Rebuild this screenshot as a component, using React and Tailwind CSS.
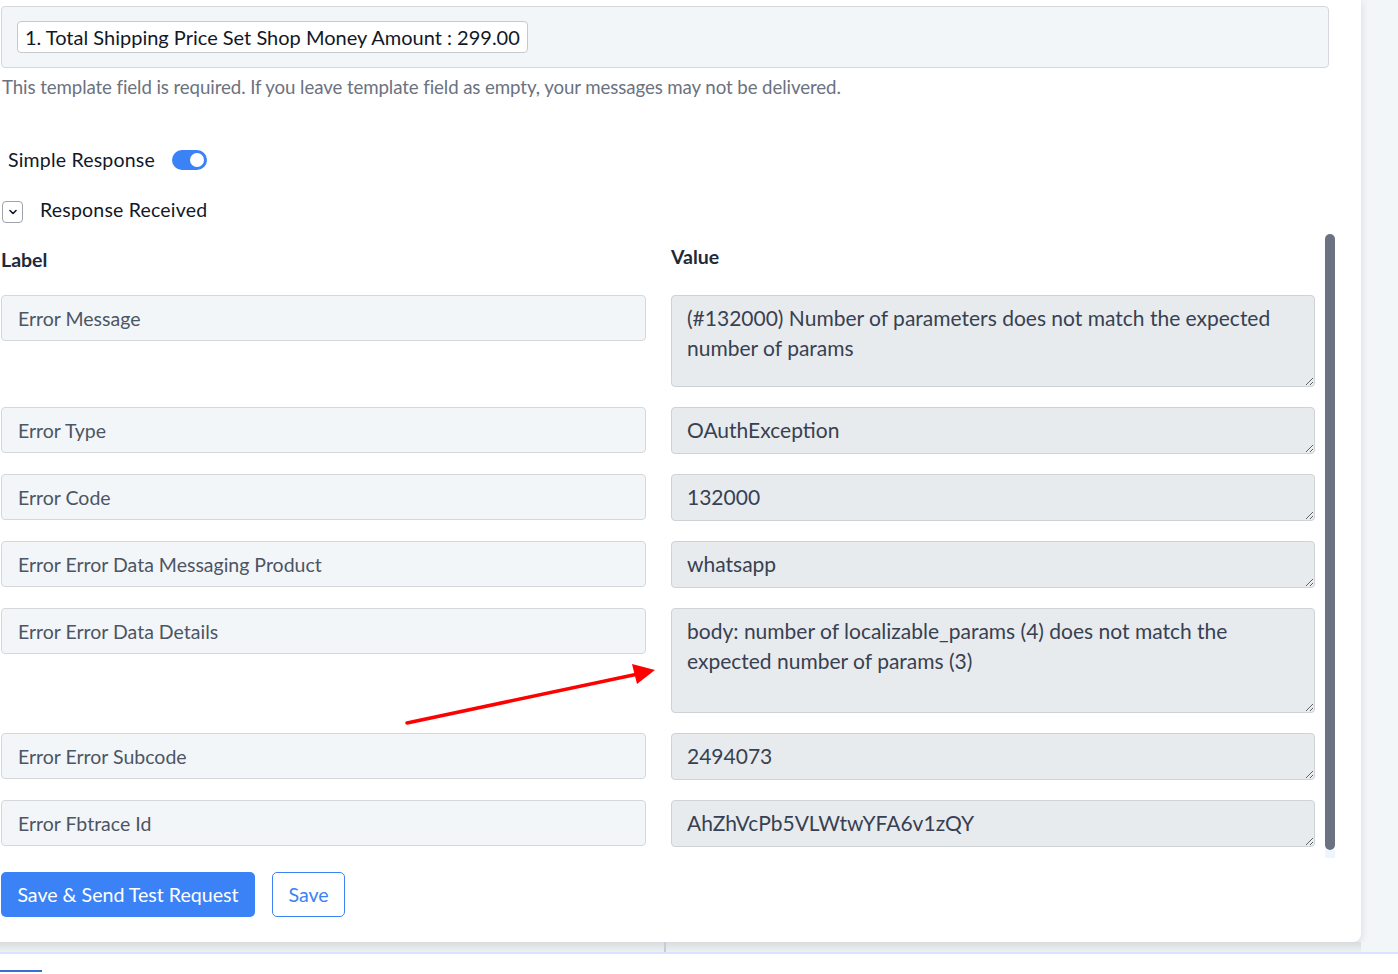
import React from "react";

const rows = [
  { label: "Error Message", value: "(#132000) Number of parameters does not match the expected\nnumber of params", h: "h-[92px]" },
  { label: "Error Type", value: "OAuthException", h: "h-[47px]" },
  { label: "Error Code", value: "132000", h: "h-[47px]" },
  { label: "Error Error Data Messaging Product", value: "whatsapp", h: "h-[47px]" },
  { label: "Error Error Data Details", value: "body: number of localizable_params (4) does not match the\nexpected number of params (3)", h: "h-[105px]" },
  { label: "Error Error Subcode", value: "2494073", h: "h-[47px]" },
  { label: "Error Fbtrace Id", value: "AhZhVcPb5VLWtwYFA6v1zQY", h: "h-[47px]" },
];

export default function App() {
  return (
    <div className="relative w-[1398px] h-[974px] overflow-hidden bg-white font-['Lato',sans-serif]">
      <div className="flex flex-col bg-[#f3f6f9]">
        <div className="w-[1361px] h-[942px] bg-white rounded-br-lg shadow-[0_2px_8px_rgba(0,0,0,0.12)] pl-px pr-[25px] pt-[6px] flex flex-col">
          {/* Top template box */}
          <div className="shrink-0 w-[1328px] h-[62px] bg-[#f3f6f9] border border-[#d4d8dd] rounded-[4px] pl-[15px] pt-[14px]">
            <div className="inline-flex items-center h-[32px] bg-white border border-[#c5cad0] rounded-[4px] px-[7px] text-[20px] text-[#111827]">
              1. Total Shipping Price Set Shop Money Amount : 299.00
            </div>
          </div>
          <p className="shrink-0 mt-[7px] h-[24px] leading-[24px] text-[18.7px] text-[#6b7280] tracking-[-0.1px] pl-px whitespace-nowrap">
            This template field is required. If you leave template field as empty, your messages may not be delivered.
          </p>

          {/* Simple response toggle */}
          <div className="shrink-0 mt-[49px] h-[24px] flex items-center pl-[7px]">
            <span className="text-[19.5px] text-[#111827] tracking-[0.2px]">Simple Response</span>
            <div className="ml-[17px] w-[35px] h-[20px] rounded-full bg-[#3b82f6] flex items-center justify-end pr-[3px]">
              <div className="w-[14px] h-[14px] rounded-full bg-white" />
            </div>
          </div>

          {/* Response received */}
          <div className="shrink-0 mt-[27px] h-[24px] flex items-center pl-px">
            <div className="w-[21px] h-[22px] border border-[#9ca3af] rounded-[4px] flex items-center justify-center bg-white mt-[2px]">
              <svg width="10" height="10" viewBox="0 0 10 10" fill="none">
                <path d="M2 3.5 L5 6.5 L8 3.5" stroke="#111827" strokeWidth="1.6" strokeLinecap="round" strokeLinejoin="round" />
              </svg>
            </div>
            <span className="ml-[17px] text-[19.5px] text-[#111827] tracking-[0.2px] -mt-[2px]">Response Received</span>
          </div>

          {/* Scroll area */}
          <div className="shrink-0 mt-[11px] h-[624px] flex">
            <div className="w-[1314px] flex flex-col">
              <div className="shrink-0 h-[61px] grid grid-cols-[645px_644px] gap-x-[25px] items-start">
                <div className="mt-[14px] h-[24px] leading-[24px] text-[19.5px] font-bold text-[#1f2937]">Label</div>
                <div className="mt-[11px] h-[24px] leading-[24px] text-[19.5px] font-bold text-[#1f2937]">Value</div>
              </div>
              <div className="flex flex-col gap-[20px]">
                {rows.map((r) => (
                  <div key={r.label} className="shrink-0 grid grid-cols-[645px_644px] gap-x-[25px] items-start">
                    <input
                      readOnly
                      value={r.label}
                      className="h-[46px] w-full bg-[#f3f6f9] border border-[#d4d8dd] rounded-[4px] px-[16px] text-[19.5px] text-[#4b5563] outline-none font-['Lato',sans-serif]"
                    />
                    <textarea
                      readOnly
                      value={r.value}
                      className={`${r.h} w-full bg-[#e8ebee] border border-[#ced3d8] rounded-[4px] px-[15px] pt-[7px] text-[21px] leading-[30px] text-[#374151] outline-none resize-y overflow-hidden font-['Lato',sans-serif]`}
                    />
                  </div>
                ))}
              </div>
            </div>
            <div className="ml-[10px] w-[10px] flex flex-col">
              <div className="h-[616px] w-[10px] rounded-full bg-[#6b7280]" />
              <div className="h-[8px] w-[10px] bg-[#eef5ff]" />
            </div>
          </div>

          {/* Buttons */}
          <div className="shrink-0 mt-[14px] flex items-center gap-[17px]">
            <button className="h-[45px] w-[254px] rounded-[5px] bg-[#3b82f6] text-white text-[19.6px] font-['Lato',sans-serif]">
              Save &amp; Send Test Request
            </button>
            <button className="h-[45px] w-[73px] rounded-[5px] border border-[#3b82f6] bg-white text-[#3b82f6] text-[19.6px] font-['Lato',sans-serif]">
              Save
            </button>
          </div>
        </div>

        {/* Bottom strip */}
        <div className="h-[12px] flex border-b-2 border-[#d6e4ff]">
          <div className="w-[664px] h-full bg-gradient-to-b from-[#d9dcdf] to-[#eef1f4]" />
          <div className="w-[2px] h-full bg-[#c9cdd2]" />
          <div className="w-[695px] h-full bg-gradient-to-b from-[#d9dcdf] to-[#eef1f4]" />
          <div className="flex-1 h-full bg-[#f3f6f9]" />
        </div>
      </div>
      <div className="mt-[16px] w-[42px] h-[2px] bg-[#3b6fd8]" />

      {/* Red annotation arrow */}
      <svg className="absolute left-0 top-0 pointer-events-none" width="1398" height="974">
        <line x1="407" y1="723" x2="638" y2="674" stroke="#ff0000" strokeWidth="3.5" strokeLinecap="round" />
        <polygon points="655,670 632,664 637,684" fill="#ff0000" />
      </svg>
    </div>
  );
}
